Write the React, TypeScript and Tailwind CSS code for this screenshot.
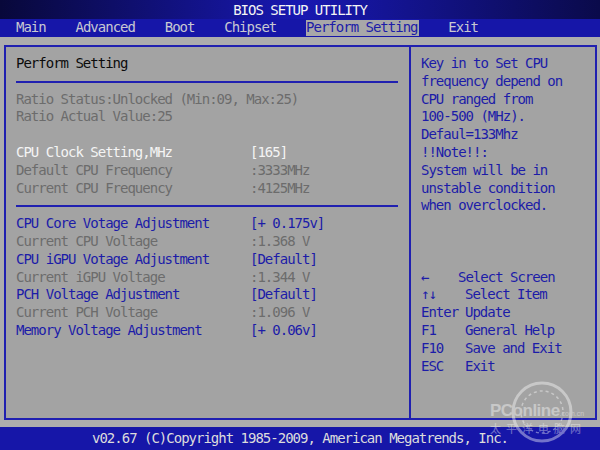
import React from "react";

type Tone = "blue" | "gray" | "white";

const toneCls: Record<Tone, string> = {
  blue: "text-[#1c1ca8]",
  gray: "text-[#6c6c6c]",
  white: "text-[#f4f4f4]",
};

function Row({ label, value, tone }: { label: string; value: string; tone: Tone }) {
  return (
    <div className={`flex h-[17.8px] items-center whitespace-pre ${toneCls[tone]}`}>
      <span className="w-[234px] shrink-0">{label}</span>
      <span>{value}</span>
    </div>
  );
}

function Blank() {
  return <div className="h-[17.8px]" />;
}

function Rule() {
  return (
    <div className="flex h-[17.8px] items-center">
      <div className="h-[2px] w-full bg-[#2020b0]" />
    </div>
  );
}

function Help({ k, v, w = "w-[44px]" }: { k: string; v: string; w?: string }) {
  return (
    <div className="flex h-[17.8px] items-center whitespace-pre text-[#1c1ca8]">
      <span className={`${w} shrink-0`}>{k}</span>
      <span>{v}</span>
    </div>
  );
}

export default function App() {
  return (
    <div className="relative flex h-[450px] w-[600px] flex-col overflow-hidden bg-[#adadad] font-['DejaVu_Sans_Mono',monospace] text-[14px] leading-[17.8px] tracking-[-1px]">
      {/* Title bar */}
      <div className="flex h-[19px] items-center justify-center bg-[linear-gradient(to_right,#08083a,#1818b2_50%,#0a0a4a)] pt-[2px] text-[#f4f4f4]">
        BIOS SETUP UTILITY
      </div>
      {/* Menu bar */}
      <div className="flex h-[18px] items-center gap-[29.8px] bg-[#1616a8] pl-[16px] text-[#c8c8d2]">
        <span>Main</span>
        <span>Advanced</span>
        <span>Boot</span>
        <span>Chipset</span>
        <span className="flex h-[16px] items-center bg-[#a8a8a8] pr-[1px] text-[#1c1ca8]">Perform Setting</span>
        <span>Exit</span>
      </div>

      {/* Main area */}
      <div className="flex flex-1 pb-[7px] pl-[4px] pr-[3px] pt-[8px]">
        <div className="flex flex-1 border-2 border-[#2020b0] bg-[#a3a3a3]">
          {/* Left panel */}
          <div className="flex w-[403px] flex-col pl-[10px] pr-[11px] pt-[8px]">
            <div className="flex h-[17.8px] items-center text-[#0c0c0c]">Perform Setting</div>
            <Rule />
            <Row label="Ratio Status:Unlocked (Min:09, Max:25)" value="" tone="gray" />
            <Row label="Ratio Actual Value:25" value="" tone="gray" />
            <Blank />
            <Row label="CPU Clock Setting,MHz" value="[165]" tone="white" />
            <Row label="Default CPU Frequency" value=":3333MHz" tone="gray" />
            <Row label="Current CPU Frequency" value=":4125MHz" tone="gray" />
            <Rule />
            <Row label="CPU Core Votage Adjustment" value="[+ 0.175v]" tone="blue" />
            <Row label="Current CPU Voltage" value=":1.368 V" tone="gray" />
            <Row label="CPU iGPU Votage Adjustment" value="[Default]" tone="blue" />
            <Row label="Current iGPU Voltage" value=":1.344 V" tone="gray" />
            <Row label="PCH Voltage Adjustment" value="[Default]" tone="blue" />
            <Row label="Current PCH Voltage" value=":1.096 V" tone="gray" />
            <Row label="Memory Voltage Adjustment" value="[+ 0.06v]" tone="blue" />
          </div>
          {/* Divider */}
          <div className="w-[2px] bg-[#2020b0]" />
          {/* Right panel */}
          <div className="flex flex-1 flex-col pl-[10px] pt-[8px] text-[#1c1ca8]">
            <div className="h-[17.8px]">Key in to Set CPU</div>
            <div className="h-[17.8px]">frequency depend on</div>
            <div className="h-[17.8px]">CPU ranged from</div>
            <div className="h-[17.8px]">100-500 (MHz).</div>
            <div className="h-[17.8px]">Defaul=133Mhz</div>
            <div className="h-[17.8px]">!!Note!!:</div>
            <div className="h-[17.8px]">System will be in</div>
            <div className="h-[17.8px]">unstable condition</div>
            <div className="h-[17.8px]">when overclocked.</div>
            <Blank />
            <Blank />
            <Blank />
            <Help k="←" v="Select Screen" w="w-[37px]" />
            <Help k="↑↓" v="Select Item" />
            <Help k="Enter" v="Update" />
            <Help k="F1" v="General Help" />
            <Help k="F10" v="Save and Exit" />
            <Help k="ESC" v="Exit" />
          </div>
        </div>
      </div>

      {/* Footer */}
      <div className="flex h-[23px] items-center justify-center bg-[#1616a8] text-[#dcdcdc]">
        v02.67 (C)Copyright 1985-2009, American Megatrends, Inc.
      </div>

      {/* Watermark */}
      <div className="pointer-events-none absolute left-[488px] top-[378px] h-[66px] w-[108px] opacity-40">
        <svg className="absolute left-[18px] top-[0px]" width="72" height="66" viewBox="0 0 72 66">
          <circle cx="36" cy="34" r="29" fill="none" stroke="#ffffff" strokeWidth="3" />
          <circle cx="36" cy="34" r="21" fill="none" stroke="#ffffff" strokeWidth="1.5" strokeDasharray="3 3" />
        </svg>
        <div className="absolute left-[2px] top-[24px] whitespace-nowrap font-['Liberation_Sans',sans-serif] text-[17px] font-bold leading-[18px] tracking-[-0.5px] text-white">
          PConline
          <span className="text-[7px] font-normal tracking-normal">.com.cn</span>
        </div>
        <div className="absolute left-[2px] top-[44px] whitespace-nowrap font-['Noto_Sans_CJK_SC',sans-serif] text-[11px] leading-[12px] tracking-[5px] text-white">
          太平洋电脑网
        </div>
      </div>
    </div>
  );
}
